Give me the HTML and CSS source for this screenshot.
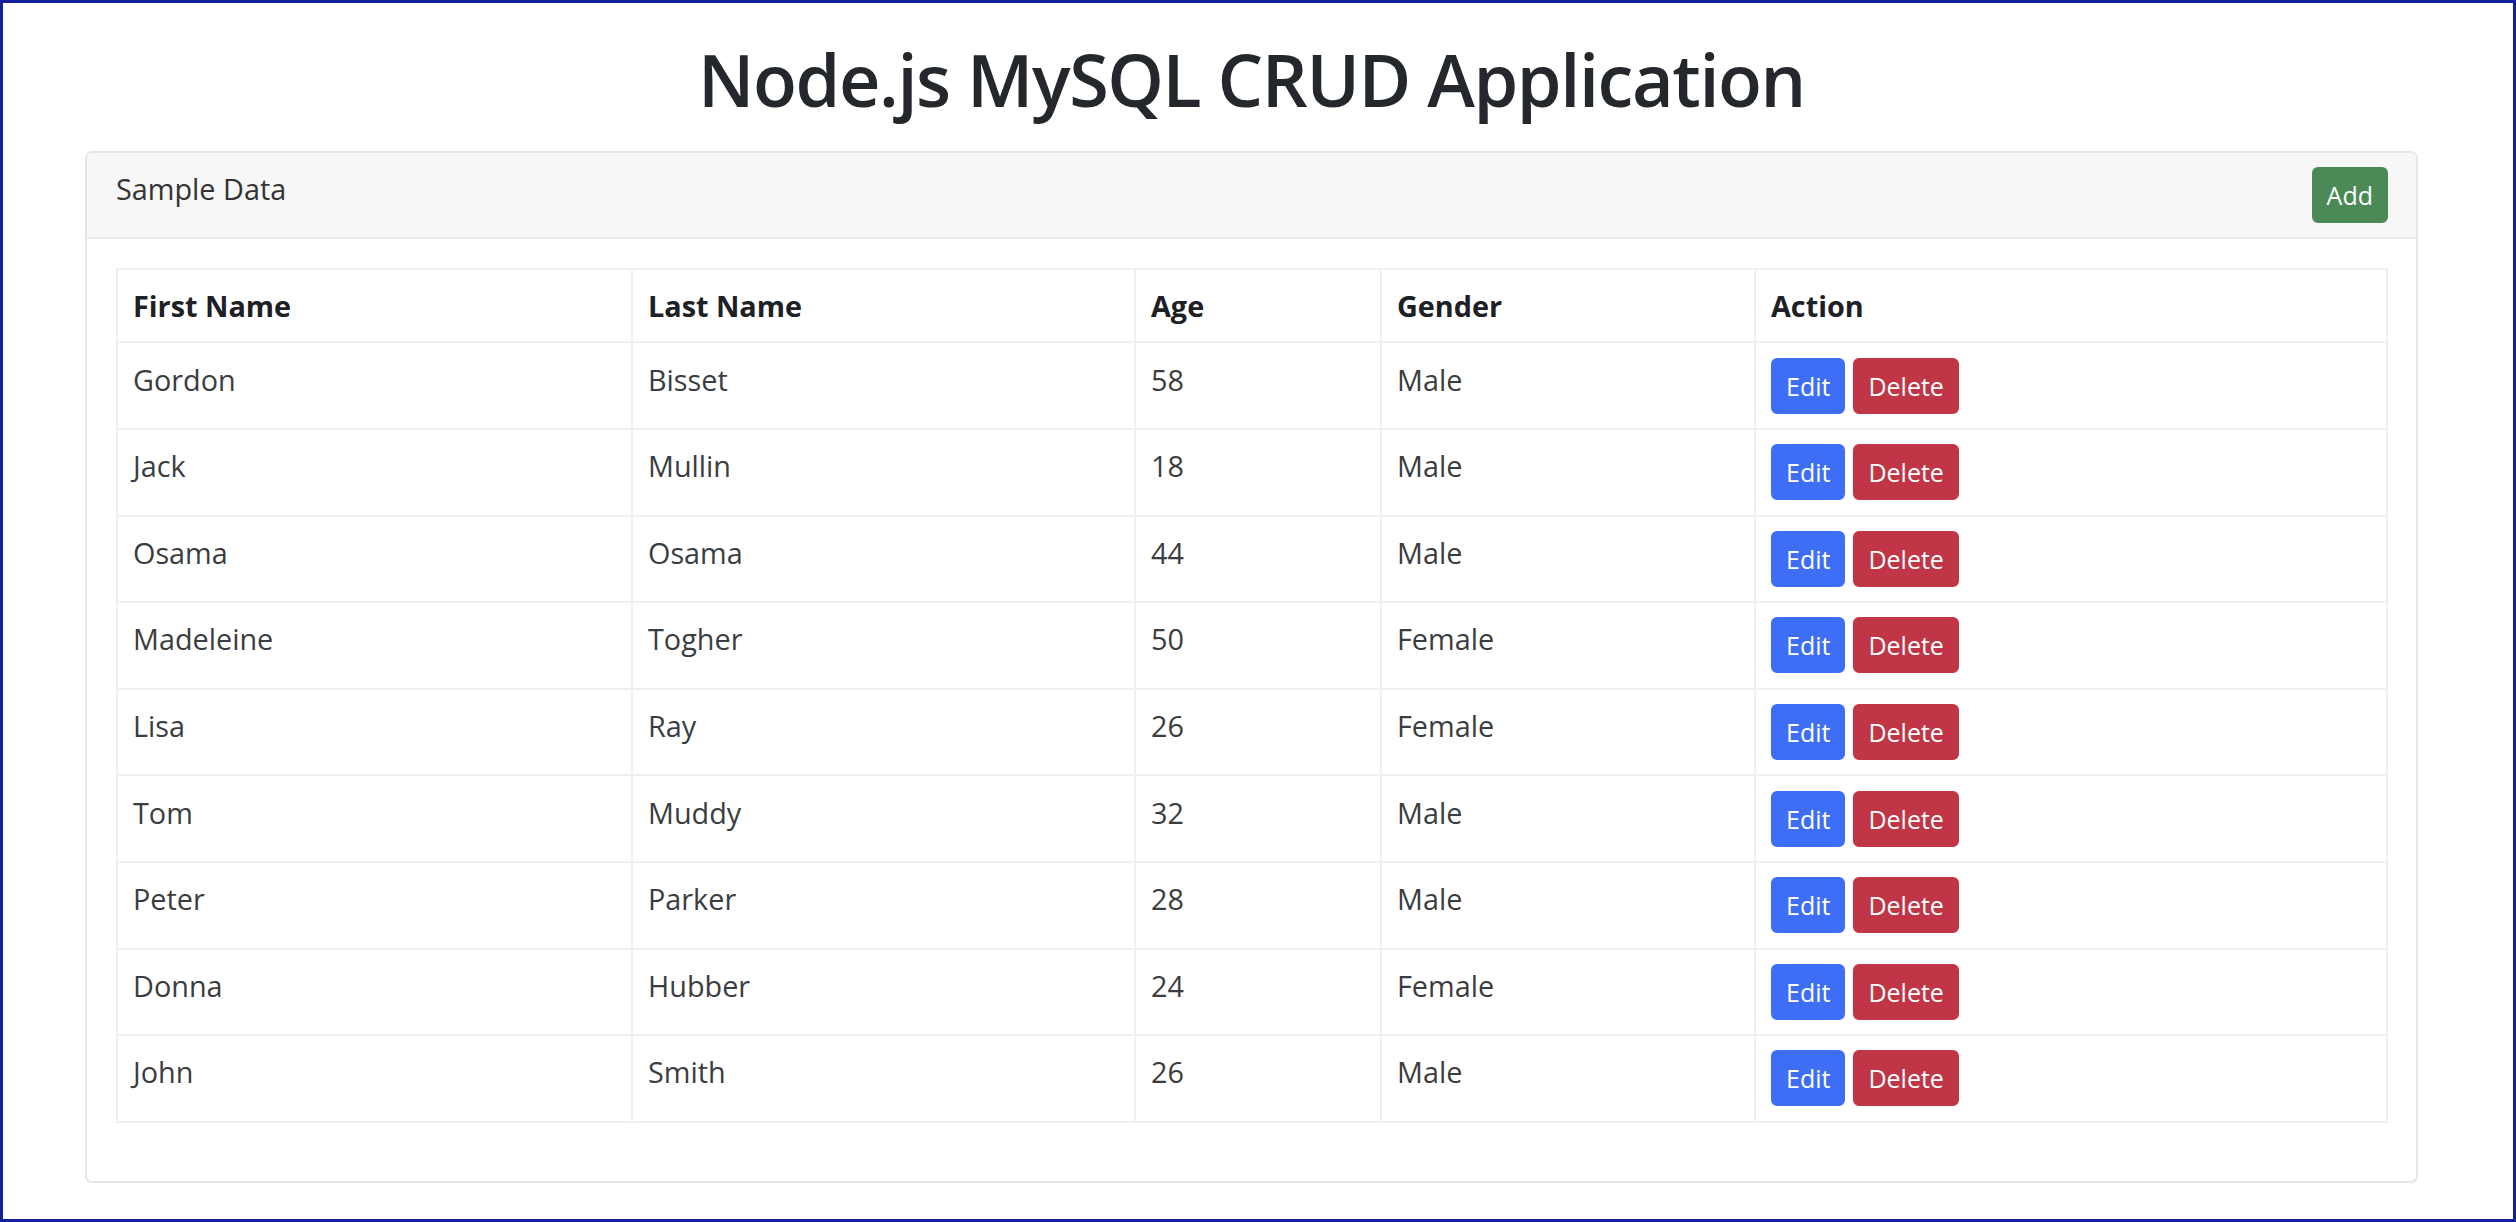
FILE: index.html
```html
<!DOCTYPE html>
<html lang="en">
<head>
<meta charset="utf-8">
<title>Node.js MySQL CRUD Application</title>
<link rel="stylesheet" href="styles.css">
</head>
<body>
<div class="frame">
  <div class="container">
    <h1 class="title">Node.js MySQL CRUD Application</h1>
    <div class="card">
      <div class="card-header">
        <span class="card-title">Sample Data</span>
        <button class="btn btn-add">Add</button>
      </div>
      <div class="card-body">
        <table class="table">
          <colgroup>
            <col class="c-first">
            <col class="c-last">
            <col class="c-age">
            <col class="c-gender">
            <col class="c-action">
          </colgroup>
          <thead>
            <tr><th>First Name</th><th>Last Name</th><th>Age</th><th>Gender</th><th>Action</th></tr>
          </thead>
          <tbody>
            <tr><td>Gordon</td><td>Bisset</td><td>58</td><td>Male</td><td><button class="btn btn-edit">Edit</button><button class="btn btn-delete">Delete</button></td></tr>
            <tr><td>Jack</td><td>Mullin</td><td>18</td><td>Male</td><td><button class="btn btn-edit">Edit</button><button class="btn btn-delete">Delete</button></td></tr>
            <tr><td>Osama</td><td>Osama</td><td>44</td><td>Male</td><td><button class="btn btn-edit">Edit</button><button class="btn btn-delete">Delete</button></td></tr>
            <tr><td>Madeleine</td><td>Togher</td><td>50</td><td>Female</td><td><button class="btn btn-edit">Edit</button><button class="btn btn-delete">Delete</button></td></tr>
            <tr><td>Lisa</td><td>Ray</td><td>26</td><td>Female</td><td><button class="btn btn-edit">Edit</button><button class="btn btn-delete">Delete</button></td></tr>
            <tr><td>Tom</td><td>Muddy</td><td>32</td><td>Male</td><td><button class="btn btn-edit">Edit</button><button class="btn btn-delete">Delete</button></td></tr>
            <tr><td>Peter</td><td>Parker</td><td>28</td><td>Male</td><td><button class="btn btn-edit">Edit</button><button class="btn btn-delete">Delete</button></td></tr>
            <tr><td>Donna</td><td>Hubber</td><td>24</td><td>Female</td><td><button class="btn btn-edit">Edit</button><button class="btn btn-delete">Delete</button></td></tr>
            <tr><td>John</td><td>Smith</td><td>26</td><td>Male</td><td><button class="btn btn-edit">Edit</button><button class="btn btn-delete">Delete</button></td></tr>
          </tbody>
        </table>
      </div>
    </div>
  </div>
</div>
</body>
</html>
```

FILE: styles.css
```css
html, body {
  margin: 0;
  padding: 0;
  background: #ffffff;
}

body {
  font-family: "Open Sans", "Noto Sans", "Liberation Sans", sans-serif;
  color: #212529;
}

.frame {
  box-sizing: border-box;
  width: 2516px;
  height: 1222px;
  border: 3px solid #15209a;
  padding: 33px 95px 0 82px;
  overflow: hidden;
}

.container {
  width: 2333px;
}

.title {
  margin: 0 0 29px 0;
  font-size: 72px;
  font-weight: 550;
  letter-spacing: -1.4px;
  line-height: 1.2;
  text-align: center;
  color: #24272b;
}

.card {
  border: 2px solid #e6e6e6;
  border-radius: 7px;
  background: #ffffff;
  overflow: hidden;
}

.card-header {
  display: flex;
  justify-content: space-between;
  align-items: flex-start;
  padding: 14px 28px 14px 29px;
  background: #f7f7f7;
  border-bottom: 2px solid #ebebeb;
}

.card-title {
  font-size: 28.8px;
  line-height: 43px;
  color: #333333;
}

.card-body {
  padding: 29px 28px 58px 29px;
}

.table {
  width: 100%;
  border-collapse: collapse;
  table-layout: fixed;
  font-size: 28.8px;
  line-height: 43px;
}

.c-first { width: 515px; }
.c-last { width: 503px; }
.c-age { width: 246px; }
.c-gender { width: 374px; }
.c-action { width: auto; }

.table th,
.table td {
  border: 2px solid #eef0f2;
  padding: 14px 15px;
  text-align: left;
  vertical-align: top;
  color: #2b2f33;
}

.table td {
  padding: 14.3px 15px;
  font-weight: 400;
  color: #3a3d41;
}

.table th {
  font-weight: 700;
  color: #1d2024;
}

.btn {
  display: inline-block;
  font-family: inherit;
  font-size: 25px;
  line-height: 38px;
  padding: 7px 13px;
  border: 2px solid transparent;
  border-radius: 6px;
  color: #ffffff;
  cursor: pointer;
  vertical-align: top;
}

.btn-add {
  background: #4b8a57;
  border-color: #4b8a57;
}

.btn-edit {
  background: #3d6ef5;
  border-color: #3d6ef5;
  margin-right: 8px;
}

.btn-delete {
  background: #c03646;
  border-color: #c03646;
}
```
